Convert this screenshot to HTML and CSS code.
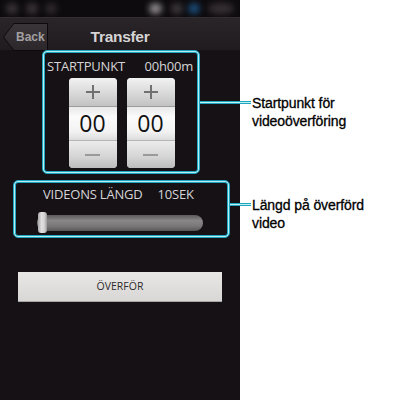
FILE: index.html
```html
<!DOCTYPE html>
<html lang="sv">
<head>
<meta charset="utf-8">
<title>Transfer</title>
<link rel="stylesheet" href="styles.css">
</head>
<body>
<div class="page">
  <div class="phone">
    <div class="status">
      <span class="dot d1"></span>
      <span class="dot d2"></span>
      <span class="dot d3"></span>
      <span class="dot d4"></span>
      <span class="dot d5"></span>
      <span class="dot d6"></span>
      <span class="dot d7"></span>
    </div>
    <div class="header">
      <div class="back"><div class="back-inner">Back</div></div>
      <div class="title">Transfer</div>
      <div></div>
    </div>
    <div class="box box-start">
      <div class="row-label"><span>STARTPUNKT</span><span>00h00m</span></div>
      <div class="pickers">
        <div class="picker">
          <div class="plus"><span class="cross"></span></div>
          <div class="num">00</div>
          <div class="minus"><span class="bar"></span></div>
        </div>
        <div class="picker">
          <div class="plus"><span class="cross"></span></div>
          <div class="num">00</div>
          <div class="minus"><span class="bar"></span></div>
        </div>
      </div>
      <div class="callout callout-start">
        <span class="line line-long"></span>
        <span class="note">Startpunkt för<br>videoöverföring</span>
      </div>
    </div>
    <div class="box box-length">
      <div class="row-label row-label-2"><span>VIDEONS LÄNGD</span><span>10SEK</span></div>
      <div class="slider">
        <div class="track"><span class="thumb"></span></div>
      </div>
      <div class="callout callout-length">
        <span class="line line-short"></span>
        <span class="note">Längd på överförd<br>video</span>
      </div>
    </div>
    <div class="button">ÖVERFÖR</div>
  </div>
  <div class="side"></div>
</div>
</body>
</html>
```
FILE: styles.css
```css
html, body {
  margin: 0;
  padding: 0;
  background: #ffffff;
}

.page {
  display: flex;
  width: 400px;
  height: 400px;
  overflow: hidden;
}

.phone {
  width: 240px;
  height: 400px;
  background: #151115;
  display: flex;
  flex-direction: column;
  font-family: "Open Sans", "DejaVu Sans", sans-serif;
}

.side {
  flex: 1;
  background: #ffffff;
}

/* status bar */
.status {
  height: 17px;
  background: #0e0b0e;
  position: relative;
  overflow: hidden;
}

.dot {
  position: absolute;
  top: 3px;
  width: 12px;
  height: 11px;
  border-radius: 50%;
  background: #3a3438;
  filter: blur(3px);
}

.d1 { left: 6px; }
.d2 { left: 26px; }
.d3 { left: 45px; background: #2e292c; }
.d4 { left: 149px; background: #8e8a8d; width: 13px; }
.d5 { left: 171px; background: #3c373a; }
.d6 { left: 188px; background: #1a4c78; }
.d7 { left: 208px; width: 26px; background: #352f33; }

/* header */
.header {
  height: 33px;
  background: linear-gradient(#2a2528, #1f1b1e);
  border-top: 1px solid #332d31;
  box-sizing: border-box;
  display: grid;
  grid-template-columns: 1fr auto 1fr;
  align-items: start;
}

.back {
  margin-top: 5px;
  margin-left: 3px;
  width: 45px;
  height: 28px;
  background: #0c0a0c;
  clip-path: polygon(11px 0, 100% 0, 100% 100%, 11px 100%, 0 50%);
  position: relative;
  z-index: 1;
}

.back-inner {
  position: absolute;
  left: 1px;
  top: 1px;
  right: 1px;
  bottom: 1px;
  background: linear-gradient(#3a3538, #2b272a);
  clip-path: polygon(10px 0, 100% 0, 100% 100%, 10px 100%, 0 50%);
  color: #a3a0a2;
  font-family: "Liberation Sans", Arial, sans-serif;
  font-weight: bold;
  font-size: 12px;
  line-height: 26px;
  padding-left: 12px;
  box-sizing: border-box;
}

.title {
  margin-top: 5px;
  line-height: 28px;
  color: #d6d4d5;
  font-family: "Liberation Sans", Arial, sans-serif;
  font-weight: bold;
  font-size: 15.5px;
  letter-spacing: -0.3px;
}

/* highlight boxes */
.box {
  position: relative;
  box-sizing: border-box;
  border: 1px solid #1fa6bf;
  border-radius: 5px;
  box-shadow: inset 0 0 0 1px #b9eef7, inset 0 0 0 2px #1fa6bf;
  padding: 2px;
}

.box-start {
  width: 158px;
  height: 124px;
  margin-left: 42px;
  z-index: 2;
}

.box-length {
  width: 217px;
  height: 58px;
  margin-top: 6px;
  margin-left: 13px;
}

.row-label {
  display: flex;
  justify-content: space-between;
  color: #d6d4d5;
  font-size: 13px;
  line-height: 18px;
  margin-top: 4px;
  padding: 0 4px 0 2px;
  letter-spacing: -0.2px;
}

.row-label-2 {
  margin-top: 2px;
  justify-content: flex-start;
  gap: 15px;
  padding-left: 27px;
}

.pickers {
  display: flex;
  justify-content: center;
  gap: 10px;
  margin-top: 3px;
  padding-left: 1px;
}

.picker {
  width: 48px;
  height: 90px;
  border-radius: 4px;
  overflow: hidden;
  display: flex;
  flex-direction: column;
  background: #cfcfcf;
}

.plus {
  height: 28px;
  background: linear-gradient(#f2f2f2, #d6d6d6 60%, #c2c2c2);
  display: flex;
  align-items: center;
  justify-content: center;
}

.cross {
  position: relative;
  display: block;
  width: 14px;
  height: 2px;
  background: #707070;
}

.cross::after {
  content: "";
  position: absolute;
  left: 6px;
  top: -6px;
  width: 2px;
  height: 14px;
  background: #707070;
}

.num {
  height: 35px;
  background: linear-gradient(#e8e8e8, #fbfbfb 30%, #f2f2f2 75%, #dcdcdc);
  border-top: 1px solid #9d9d9d;
  border-bottom: 1px solid #b5b5b5;
  box-sizing: border-box;
  color: #111111;
  font-size: 23px;
  line-height: 33px;
  text-align: center;
}

.minus {
  flex: 1;
  background: linear-gradient(#ececec, #d4d4d4 60%, #bcbcbc);
  display: flex;
  align-items: center;
  justify-content: center;
}

.bar {
  display: block;
  width: 15px;
  height: 2px;
  background: #9a9a9a;
  margin-top: 1px;
}

/* slider */
.slider {
  margin-top: 9px;
  margin-left: 21px;
  width: 166px;
  height: 21px;
  display: flex;
  align-items: center;
}

.track {
  position: relative;
  width: 100%;
  height: 16px;
  border-radius: 8px;
  background: linear-gradient(#5c595b, #8a8789 35%, #7a7779 70%, #5a5759);
}

.thumb {
  position: absolute;
  left: 1px;
  top: -3px;
  width: 9px;
  height: 21px;
  border-radius: 3px;
  background: linear-gradient(90deg, #a9a7a8, #e2e0e1 40%, #d4d2d3 70%, #9a9899);
}

/* button */
.button {
  margin-top: 34px;
  margin-left: 18px;
  width: 204px;
  height: 30px;
  background: linear-gradient(#e9e7e5, #d9d7d5);
  border-bottom: 1px solid #a9a7a5;
  box-sizing: border-box;
  color: #2e2b2c;
  font-size: 10.5px;
  line-height: 29px;
  text-align: center;
}

/* callouts */
.callout {
  position: absolute;
  display: flex;
  align-items: flex-start;
  white-space: nowrap;
}

.callout-start {
  left: calc(100% + 1px);
  top: 43px;
}

.callout-length {
  left: calc(100% + 1px);
  top: 15px;
}

.line {
  display: block;
  height: 1px;
  background: #c3f0f8;
  border-top: 1px solid #1fa6bf;
  border-bottom: 1px solid #1fa6bf;
  margin-top: 7px;
}

.line-long { width: 51px; }
.line-short { width: 21px; }

.note {
  margin-left: 1px;
  color: #000000;
  font-family: "Liberation Sans", Arial, sans-serif;
  font-size: 14px;
  line-height: 18px;
  letter-spacing: -0.1px;
  -webkit-text-stroke: 0.3px #000000;
}
```
